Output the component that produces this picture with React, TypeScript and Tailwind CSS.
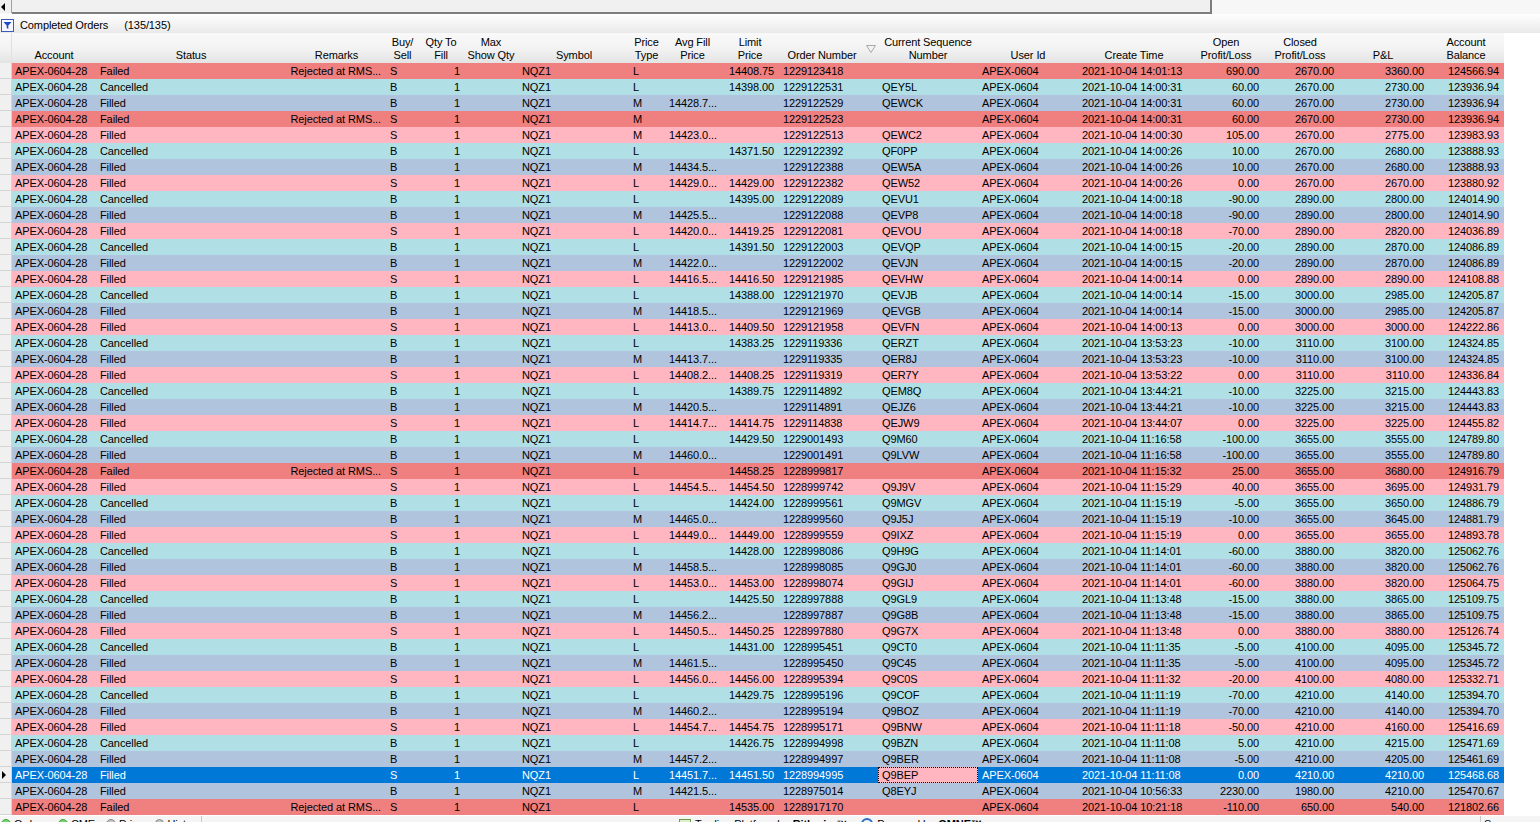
import React from "react";

// column grid: gutter + 18 data columns, widths read off the grid lines
const GRID =
  "grid grid-cols-[12px_84px_190px_101px_31px_46px_54px_112px_33px_59px_56px_100px_100px_100px_112px_72px_76px_90px_76px]";

type Row = [string, string, string, string, string, string, string, string, string, string, string, string];

// status, side, price type, avg fill, limit, order #, seq, time, open, closed, p&l, balance
const rows: Row[] = [
  ["Failed", "S", "L", "", "14408.75", "1229123418", "", "14:01:13", "690.00", "2670.00", "3360.00", "124566.94"],
  ["Cancelled", "B", "L", "", "14398.00", "1229122531", "QEY5L", "14:00:31", "60.00", "2670.00", "2730.00", "123936.94"],
  ["Filled", "B", "M", "14428.7...", "", "1229122529", "QEWCK", "14:00:31", "60.00", "2670.00", "2730.00", "123936.94"],
  ["Failed", "S", "M", "", "", "1229122523", "", "14:00:31", "60.00", "2670.00", "2730.00", "123936.94"],
  ["Filled", "S", "M", "14423.0...", "", "1229122513", "QEWC2", "14:00:30", "105.00", "2670.00", "2775.00", "123983.93"],
  ["Cancelled", "B", "L", "", "14371.50", "1229122392", "QF0PP", "14:00:26", "10.00", "2670.00", "2680.00", "123888.93"],
  ["Filled", "B", "M", "14434.5...", "", "1229122388", "QEW5A", "14:00:26", "10.00", "2670.00", "2680.00", "123888.93"],
  ["Filled", "S", "L", "14429.0...", "14429.00", "1229122382", "QEW52", "14:00:26", "0.00", "2670.00", "2670.00", "123880.92"],
  ["Cancelled", "B", "L", "", "14395.00", "1229122089", "QEVU1", "14:00:18", "-90.00", "2890.00", "2800.00", "124014.90"],
  ["Filled", "B", "M", "14425.5...", "", "1229122088", "QEVP8", "14:00:18", "-90.00", "2890.00", "2800.00", "124014.90"],
  ["Filled", "S", "L", "14420.0...", "14419.25", "1229122081", "QEVOU", "14:00:18", "-70.00", "2890.00", "2820.00", "124036.89"],
  ["Cancelled", "B", "L", "", "14391.50", "1229122003", "QEVQP", "14:00:15", "-20.00", "2890.00", "2870.00", "124086.89"],
  ["Filled", "B", "M", "14422.0...", "", "1229122002", "QEVJN", "14:00:15", "-20.00", "2890.00", "2870.00", "124086.89"],
  ["Filled", "S", "L", "14416.5...", "14416.50", "1229121985", "QEVHW", "14:00:14", "0.00", "2890.00", "2890.00", "124108.88"],
  ["Cancelled", "B", "L", "", "14388.00", "1229121970", "QEVJB", "14:00:14", "-15.00", "3000.00", "2985.00", "124205.87"],
  ["Filled", "B", "M", "14418.5...", "", "1229121969", "QEVGB", "14:00:14", "-15.00", "3000.00", "2985.00", "124205.87"],
  ["Filled", "S", "L", "14413.0...", "14409.50", "1229121958", "QEVFN", "14:00:13", "0.00", "3000.00", "3000.00", "124222.86"],
  ["Cancelled", "B", "L", "", "14383.25", "1229119336", "QERZT", "13:53:23", "-10.00", "3110.00", "3100.00", "124324.85"],
  ["Filled", "B", "M", "14413.7...", "", "1229119335", "QER8J", "13:53:23", "-10.00", "3110.00", "3100.00", "124324.85"],
  ["Filled", "S", "L", "14408.2...", "14408.25", "1229119319", "QER7Y", "13:53:22", "0.00", "3110.00", "3110.00", "124336.84"],
  ["Cancelled", "B", "L", "", "14389.75", "1229114892", "QEM8Q", "13:44:21", "-10.00", "3225.00", "3215.00", "124443.83"],
  ["Filled", "B", "M", "14420.5...", "", "1229114891", "QEJZ6", "13:44:21", "-10.00", "3225.00", "3215.00", "124443.83"],
  ["Filled", "S", "L", "14414.7...", "14414.75", "1229114838", "QEJW9", "13:44:07", "0.00", "3225.00", "3225.00", "124455.82"],
  ["Cancelled", "B", "L", "", "14429.50", "1229001493", "Q9M60", "11:16:58", "-100.00", "3655.00", "3555.00", "124789.80"],
  ["Filled", "B", "M", "14460.0...", "", "1229001491", "Q9LVW", "11:16:58", "-100.00", "3655.00", "3555.00", "124789.80"],
  ["Failed", "S", "L", "", "14458.25", "1228999817", "", "11:15:32", "25.00", "3655.00", "3680.00", "124916.79"],
  ["Filled", "S", "L", "14454.5...", "14454.50", "1228999742", "Q9J9V", "11:15:29", "40.00", "3655.00", "3695.00", "124931.79"],
  ["Cancelled", "B", "L", "", "14424.00", "1228999561", "Q9MGV", "11:15:19", "-5.00", "3655.00", "3650.00", "124886.79"],
  ["Filled", "B", "M", "14465.0...", "", "1228999560", "Q9J5J", "11:15:19", "-10.00", "3655.00", "3645.00", "124881.79"],
  ["Filled", "S", "L", "14449.0...", "14449.00", "1228999559", "Q9IXZ", "11:15:19", "0.00", "3655.00", "3655.00", "124893.78"],
  ["Cancelled", "B", "L", "", "14428.00", "1228998086", "Q9H9G", "11:14:01", "-60.00", "3880.00", "3820.00", "125062.76"],
  ["Filled", "B", "M", "14458.5...", "", "1228998085", "Q9GJ0", "11:14:01", "-60.00", "3880.00", "3820.00", "125062.76"],
  ["Filled", "S", "L", "14453.0...", "14453.00", "1228998074", "Q9GIJ", "11:14:01", "-60.00", "3880.00", "3820.00", "125064.75"],
  ["Cancelled", "B", "L", "", "14425.50", "1228997888", "Q9GL9", "11:13:48", "-15.00", "3880.00", "3865.00", "125109.75"],
  ["Filled", "B", "M", "14456.2...", "", "1228997887", "Q9G8B", "11:13:48", "-15.00", "3880.00", "3865.00", "125109.75"],
  ["Filled", "S", "L", "14450.5...", "14450.25", "1228997880", "Q9G7X", "11:13:48", "0.00", "3880.00", "3880.00", "125126.74"],
  ["Cancelled", "B", "L", "", "14431.00", "1228995451", "Q9CT0", "11:11:35", "-5.00", "4100.00", "4095.00", "125345.72"],
  ["Filled", "B", "M", "14461.5...", "", "1228995450", "Q9C45", "11:11:35", "-5.00", "4100.00", "4095.00", "125345.72"],
  ["Filled", "S", "L", "14456.0...", "14456.00", "1228995394", "Q9C0S", "11:11:32", "-20.00", "4100.00", "4080.00", "125332.71"],
  ["Cancelled", "B", "L", "", "14429.75", "1228995196", "Q9COF", "11:11:19", "-70.00", "4210.00", "4140.00", "125394.70"],
  ["Filled", "B", "M", "14460.2...", "", "1228995194", "Q9BOZ", "11:11:19", "-70.00", "4210.00", "4140.00", "125394.70"],
  ["Filled", "S", "L", "14454.7...", "14454.75", "1228995171", "Q9BNW", "11:11:18", "-50.00", "4210.00", "4160.00", "125416.69"],
  ["Cancelled", "B", "L", "", "14426.75", "1228994998", "Q9BZN", "11:11:08", "5.00", "4210.00", "4215.00", "125471.69"],
  ["Filled", "B", "M", "14457.2...", "", "1228994997", "Q9BER", "11:11:08", "-5.00", "4210.00", "4205.00", "125461.69"],
  ["Filled", "S", "L", "14451.7...", "14451.50", "1228994995", "Q9BEP", "11:11:08", "0.00", "4210.00", "4210.00", "125468.68"],
  ["Filled", "B", "M", "14421.5...", "", "1228975014", "Q8EYJ", "10:56:33", "2230.00", "1980.00", "4210.00", "125470.67"],
  ["Failed", "S", "L", "", "14535.00", "1228917170", "", "10:21:18", "-110.00", "650.00", "540.00", "121802.66"],
];

const SELECTED = 44;

const headers: { lines: string[]; extra?: string }[] = [
  { lines: ["Account"] },
  { lines: ["Status"] },
  { lines: ["Remarks"] },
  { lines: ["Buy/", "Sell"] },
  { lines: ["Qty To", "Fill"] },
  { lines: ["Max", "Show Qty"] },
  { lines: ["Symbol"] },
  { lines: ["Price", "Type"] },
  { lines: ["Avg Fill", "Price"] },
  { lines: ["Limit", "Price"] },
  { lines: ["Order Number"], extra: "pr-[12px]" },
  { lines: ["Current Sequence", "Number"] },
  { lines: ["User Id"] },
  { lines: ["Create Time"] },
  { lines: ["Open", "Profit/Loss"] },
  { lines: ["Closed", "Profit/Loss"] },
  { lines: ["P&L"] },
  { lines: ["Account", "Balance"] },
];

// padding / alignment of each data cell
const cellCls = [
  "pl-[3px]",
  "pl-[4px]",
  "pr-[6px] text-right",
  "pl-[3px]",
  "pr-[4px] text-right",
  "pr-[4px] text-right",
  "pl-[4px]",
  "pl-[3px]",
  "pl-[6px]",
  "pr-[4px] text-right",
  "pl-[5px]",
  "pl-[4px]",
  "pl-[4px]",
  "pl-[4px]",
  "pr-[3px] text-right",
  "pr-[4px] text-right",
  "pr-[4px] text-right",
  "pr-[5px] text-right",
];

function rowBg(status: string, side: string) {
  if (status === "Failed") return "bg-[#f08080]";
  if (status === "Cancelled") return "bg-[#b0e0e6]";
  return side === "B" ? "bg-[#b0c4de]" : "bg-[#ffb6c1]";
}

const FilterIcon = () => (
  <svg width="13" height="13" viewBox="0 0 13 13">
    <rect x="0.5" y="0.5" width="12" height="12" fill="#f4f6fb" stroke="#3b5bb5" />
    <path d="M2.5 3 H10.5 L7.3 6.6 V10 L5.7 9 V6.6 Z" fill="#1f46c4" />
  </svg>
);

const Dot = ({ color }: { color: string }) => (
  <span className={`inline-block w-[10px] h-[10px] rounded-full border ${color}`} />
);

export default function App() {
  return (
    <div className="w-[1540px] h-[822px] overflow-hidden bg-white flex flex-col font-['Liberation_Sans',Arial,sans-serif] text-[11px] tracking-[-0.1px] text-black">
      {/* top strip */}
      <div className="h-[14px] flex shrink-0 bg-[#f7f7f7]">
        <div className="w-[12px] h-[13px] flex items-center border-r border-[#a0a0a0] bg-[#f0f0f0]">
          <span className="block w-0 h-0 border-y-[4px] border-y-transparent border-r-[4px] border-r-black ml-[1px]" />
        </div>
        <div className="w-[1200px] h-[14px] bg-[#f0f0f0] border-b-2 border-r-2 border-[#7d7d7d]" />
      </div>

      {/* title bar */}
      <div className="h-[19px] shrink-0 flex items-end pb-[1px] gap-[6px] pl-[1px] bg-gradient-to-b from-white to-[#e9e9e9]">
        <FilterIcon />
        <span className="leading-[14px]">Completed Orders</span>
        <span className="leading-[14px] ml-[10px]">(135/135)</span>
      </div>

      {/* header */}
      <div className="flex shrink-0">
        <div className={`${GRID} h-[30px] bg-gradient-to-b from-[#f9f9f9] via-[#f3f3f3] to-[#e4e4e4]`}>
          <div className="border-r border-[#e0e0e0]" />
          {headers.map((h, i) => (
            <div
              key={i}
              className={`relative flex flex-col justify-end items-center pb-[1px] leading-[13px] whitespace-nowrap overflow-hidden ${h.extra ?? ""}`}
            >
              {h.lines.map((l, j) => (
                <span key={j}>{l}</span>
              ))}
              {i === 10 && (
                <svg className="absolute right-[2px] top-[12px]" width="10" height="8" viewBox="0 0 10 8">
                  <path d="M0.5 0.5 H9.5 L5 7.5 Z" fill="none" stroke="#a8a8a8" />
                </svg>
              )}
            </div>
          ))}
        </div>
      </div>

      {/* rows */}
      <div className="flex flex-col shrink-0">
        {rows.map((r, idx) => {
          const [status, side, type, avg, limit, order, seq, time, open, closed, pnl, bal] = r;
          const sel = idx === SELECTED;
          const values = [
            "APEX-0604-28",
            status,
            status === "Failed" ? "Rejected at RMS..." : "",
            side,
            "1",
            "",
            "NQZ1",
            type,
            avg,
            limit,
            order,
            seq,
            "APEX-0604",
            "2021-10-04 " + time,
            open,
            closed,
            pnl,
            bal,
          ];
          return (
            <div key={idx} className={`${GRID} h-[16px] leading-[16px]`}>
              <div className="bg-[#f0f0f0] border-b border-r border-[#d4d4d4] flex items-center">
                {sel && (
                  <span className="block w-0 h-0 border-y-[4px] border-y-transparent border-l-[4px] border-l-black ml-[2px]" />
                )}
              </div>
              {values.map((v, c) => {
                const seqCell = sel && c === 11;
                return (
                  <div
                    key={c}
                    className={`whitespace-nowrap overflow-hidden ${cellCls[c]} ${
                      seqCell
                        ? "bg-[#ffb6c1] text-black outline-1 outline-dotted outline-black -outline-offset-1"
                        : sel
                          ? "bg-[#0078d7] text-white"
                          : rowBg(status, side)
                    }`}
                  >
                    {v}
                  </div>
                );
              })}
            </div>
          );
        })}
      </div>

      {/* status bar, mostly cut off by the window edge */}
      <div className="h-[22px] shrink-0 flex items-start bg-[#f5f5f5] border-t border-white">
        <div className="w-[202px] flex items-center gap-[3px] pl-[1px] border-r border-[#c8c8c8] h-[16px]">
          <Dot color="border-[#3da33d] bg-[#7bd36d]" />
          <span className="mr-[8px]">Orders</span>
          <Dot color="border-[#3da33d] bg-[#7bd36d]" />
          <span className="mr-[8px]">CME</span>
          <Dot color="border-[#8a8a8a] bg-[#c4c4c4]" />
          <span className="mr-[8px]">Price</span>
          <Dot color="border-[#8a8a8a] bg-[#c4c4c4]" />
          <span>History</span>
        </div>
        <div className="flex-1 flex items-center gap-[4px] pl-[477px] h-[16px]">
          <span className="inline-block w-[12px] h-[10px] border border-[#6a9a4a] bg-[#dfeecf]" />
          <span>Trading Platform by</span>
          <span className="font-bold">Rithmic</span>
          <span className="mr-[10px]">™</span>
          <span className="inline-block w-[12px] h-[12px] rounded-full border-2 border-[#2d6fc4]" />
          <span>Powered by</span>
          <span className="font-bold">OMNE™</span>
        </div>
        <div className="w-[60px] h-[16px] border-l border-[#c8c8c8] pl-[3px] leading-[16px]">Server Sel...</div>
      </div>
    </div>
  );
}
